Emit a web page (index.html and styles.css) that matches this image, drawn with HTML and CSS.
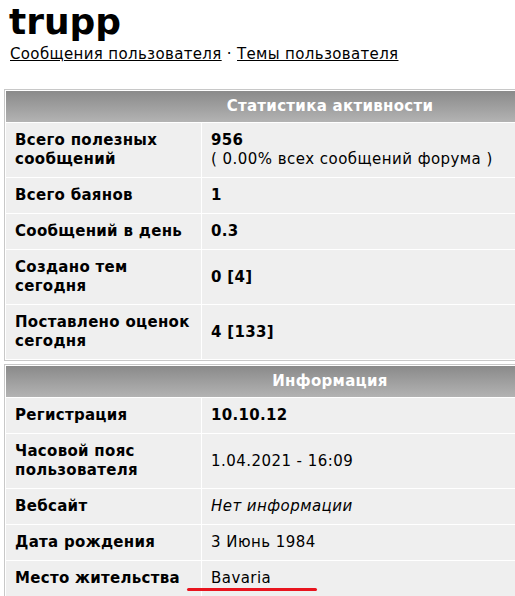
FILE: index.html
```html
<!DOCTYPE html>
<html lang="ru">
<head>
<meta charset="utf-8">
<link rel="stylesheet" href="styles.css">
</head>
<body>
<div class="page">
  <h1 class="name">trupp</h1>
  <div class="links"><a href="#">Сообщения пользователя</a> · <a href="#">Темы пользователя</a></div>

  <table class="box first">
    <tr><th colspan="2">Статистика активности</th></tr>
    <tr><td class="lbl">Всего полезных сообщений</td><td class="val"><b>956</b><br>( 0.00% всех сообщений форума )</td></tr>
    <tr><td class="lbl">Всего баянов</td><td class="val"><b>1</b></td></tr>
    <tr><td class="lbl">Сообщений в день</td><td class="val"><b>0.3</b></td></tr>
    <tr><td class="lbl">Создано тем сегодня</td><td class="val"><b>0 [4]</b></td></tr>
    <tr><td class="lbl">Поставлено оценок сегодня</td><td class="val"><b>4 [133]</b></td></tr>
  </table>

  <table class="box">
    <tr><th colspan="2">Информация</th></tr>
    <tr><td class="lbl">Регистрация</td><td class="val"><b>10.10.12</b></td></tr>
    <tr><td class="lbl">Часовой пояс пользователя</td><td class="val">1.04.2021 - 16:09</td></tr>
    <tr><td class="lbl">Вебсайт</td><td class="val"><i>Нет информации</i></td></tr>
    <tr><td class="lbl">Дата рождения</td><td class="val">3 Июнь 1984</td></tr>
    <tr><td class="lbl">Место жительства</td><td class="val"><span class="mark">Bavaria</span></td></tr>
  </table>
</div>
</body>
</html>
```
FILE: styles.css
```css
html, body { overflow: hidden; }
body {
  margin: 0;
  background: #fff;
  font-family: "DejaVu Sans", Verdana, sans-serif;
  color: #000;
}
.page {
  padding: 0 0 0 4px;
  width: 652px;
}
.name {
  margin: 0;
  padding: 2px 0 0 5px;
  font-size: 36px;
  line-height: 40px;
  font-weight: bold;
}
.links {
  padding-left: 6px;
  font-size: 15px;
  line-height: 20px;
  margin-top: 2px;
  letter-spacing: 0.35px;
}
.links a { color: #000; text-decoration: underline; }
.box {
  display: table;
  width: 652px;
  border: 1px solid #c8c8c8;
  border-collapse: separate;
  border-spacing: 1px;
  background: #fff;
  margin: 3px 0 0;
  font-size: 15px;
  line-height: 19px;
  letter-spacing: 0.45px;
}
.box.first { margin-top: 25px; }
.box th {
  height: 31px;
  padding: 0;
  background: linear-gradient(#8a8a8a, #b3b3b3);
  color: #fff;
  font-weight: bold;
  text-align: center;
  letter-spacing: 0.3px;
}
.box td {
  background: #efefef;
  padding: 8px 8px 8px 9px;
  vertical-align: middle;
}
.box td.lbl {
  width: 178px;
  font-weight: bold;
  letter-spacing: 0.3px;
}
.box b { letter-spacing: 0.3px; }
.mark { position: relative; }
.mark::after {
  content: "";
  position: absolute;
  left: -24px;
  right: -46px;
  bottom: -4px;
  height: 3px;
  border-radius: 2px;
  background: #e8141e;
}
```
